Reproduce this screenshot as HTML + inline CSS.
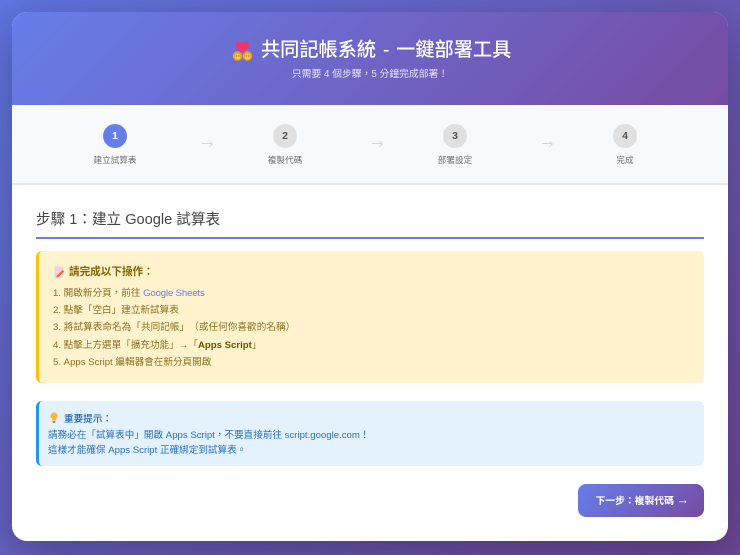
<!DOCTYPE html>
<html lang="zh-Hant">
<head>
<meta charset="utf-8">
<title>共同記帳系統</title>
<style>
*{box-sizing:border-box;margin:0;padding:0}
html,body{width:740px;height:555px;overflow:hidden}
body{position:relative;background:linear-gradient(135deg,#5f76e2 0%,#6f4698 100%);font-family:"Liberation Sans","Noto Sans CJK TC",sans-serif;color:#333;text-spacing-trim:space-all;font-kerning:none}
.shadow{position:absolute;left:12px;top:12px;width:716px;height:529px;border-radius:15px;box-shadow:0 12px 45px rgba(0,0,0,.3)}
.card{position:absolute;left:12px;top:12px;width:716px;height:529px;background:#fff;border-radius:15px;overflow:hidden;filter:blur(.3px)}
.abs{position:absolute;white-space:nowrap}
.head{position:absolute;left:0;top:0;width:716px;height:93px;background:linear-gradient(135deg,#667eea 0%,#764ba2 100%)}
.steps{position:absolute;left:0;top:93px;width:716px;height:80px;background:#f8f9fa;border-bottom:2px solid #e4e6e9}
.c{position:absolute;top:19px;width:24px;height:24px;border-radius:50%;background:#e0e0e0;color:#555;font-size:10.5px;font-weight:bold;line-height:24px;text-align:center}
.c.on{background:#667eea;color:#fff}
.sl{position:absolute;top:48px;width:120px;text-align:center;font-size:8.6px;line-height:14px;color:#707070}
.ar{position:absolute;top:38px;width:10px;height:1px;background:#d6d6d6}
.ar:after{content:"";position:absolute;right:0;top:-1px;width:3px;height:3px;border-top:1px solid #d6d6d6;border-right:1px solid #d6d6d6;transform:rotate(45deg)}
.yb{position:absolute;left:24px;top:239px;width:668px;height:132px;background:#fff3cd;border-left:3px solid #ffc107;border-radius:6px}
.li{position:absolute;left:41px;font-size:9.6px;line-height:17px;color:#8d7122;white-space:nowrap}
.bb{position:absolute;left:24px;top:389px;width:668px;height:65px;background:#e3f2fd;border-left:3px solid #2196f3;border-radius:6px}
.bl{position:absolute;left:36px;font-size:9.6px;line-height:15px;color:#2a70bd;white-space:nowrap}
.btn{position:absolute;left:566px;top:472px;width:126px;height:33px;border-radius:8px;background:linear-gradient(135deg,#667eea 0%,#764ba2 100%);color:#fff;font-size:9.8px;font-weight:bold;line-height:33px;white-space:nowrap;padding-left:17.5px}
</style>
</head>
<body>
<div class="shadow"></div>
<div class="card">
  <div class="head"></div>
  <svg class="abs" style="left:220px;top:29px" width="21" height="21" viewBox="0 0 21 21">
    <path d="M10.500 11.500C6 8.500 3.800 6.500 3.800 4 3.800 2 5.300 .8 6.900 .8 8.400 .8 9.800 1.700 10.500 3 11.200 1.700 12.600 .8 14.100 .8 15.700 .8 17.200 2 17.200 4 17.200 6.500 15 8.500 10.500 11.500Z" fill="#f5316f"/>
    <circle cx="5.500" cy="15" r="4.800" fill="#ef9f26"/>
    <circle cx="15.500" cy="15" r="4.800" fill="#ef9f26"/>
    <circle cx="5.500" cy="15.500" r="3" fill="#f9c93f"/>
    <circle cx="15.500" cy="15.500" r="3" fill="#f9c93f"/>
    <path d="M3.700 15h1M6.300 15h1M13.700 15h1M16.300 15h1" stroke="#7a4a10" stroke-width=".9"/>
  </svg>
  <div class="abs" style="left:249px;top:24px;font-size:19.2px;line-height:30px;font-weight:500;color:#fff;word-spacing:1.5px">共同記帳系統 - 一鍵部署工具</div>
  <div class="abs" style="left:0;top:55px;width:716px;text-align:center;font-size:9.8px;line-height:16px;color:#fff;opacity:.82">只需要 4 個步驟，5 分鐘完成部署！</div>

  <div class="steps">
    <div class="c on" style="left:91px">1</div>
    <div class="sl" style="left:43px">建立試算表</div>
    <div class="ar" style="left:190px"></div>
    <div class="c" style="left:261px">2</div>
    <div class="sl" style="left:213px">複製代碼</div>
    <div class="ar" style="left:360px"></div>
    <div class="c" style="left:431px">3</div>
    <div class="sl" style="left:383px">部署設定</div>
    <div class="ar" style="left:530px"></div>
    <div class="c" style="left:601px">4</div>
    <div class="sl" style="left:553px">完成</div>
  </div>

  <div class="abs" style="left:24px;top:197px;font-size:14.6px;line-height:22px;color:#444">步驟 1：建立 Google 試算表</div>
  <div class="abs" style="left:24px;top:225px;width:668px;height:2px;background:#667eea"></div>

  <div class="yb"></div>
  <svg class="abs" style="left:42px;top:254px" width="11" height="12" viewBox="0 0 11 12">
    <path d="M.5.500h7.500l1 1V11.500H.5z" fill="#e6d6e6"/>
    <path d="M2 10.500l6.500-6.500 1.800 1.500-6.300 6z" fill="#ec6a3c"/>
  </svg>
  <div class="abs" style="left:57px;top:252px;font-size:10.6px;line-height:16px;font-weight:bold;color:#856404">請完成以下操作：</div>
  <div class="li" style="top:273px">1. 開啟新分頁，前往 <span style="color:#667eea;letter-spacing:-.15px">Google Sheets</span></div>
  <div class="li" style="top:290px">2. 點擊「空白」建立新試算表</div>
  <div class="li" style="top:307px;letter-spacing:.05px">3. 將試算表命名為「共同記帳」（或任何你喜歡的名稱）</div>
  <div class="li" style="top:325px">4. 點擊上方選單「擴充功能」→「<b style="color:#6f5303">Apps Script</b>」</div>
  <div class="li" style="top:342px">5. Apps Script 編輯器會在新分頁開啟</div>

  <div class="bb"></div>
  <svg class="abs" style="left:38px;top:400px" width="8" height="12" viewBox="0 0 8 12">
    <path d="M4 .5A3.500 3.500 0 0 0 2 6.900V8.500h4V6.900A3.500 3.500 0 0 0 4 .5Z" fill="#fdb92b"/>
    <rect x="2.700" y="9" width="2.600" height="2" fill="#a08a5c"/>
  </svg>
  <div class="bl" style="left:52px;top:400px;font-weight:500;color:#1f62ad">重要提示：</div>
  <div class="bl" style="top:416px">請務必在「試算表中」開啟 Apps Script，不要直接前往 script.google.com！</div>
  <div class="bl" style="top:431px">這樣才能確保 Apps Script 正確綁定到試算表。</div>

  <div class="btn">下一步：複製代碼 <span style="font-size:12.500px;font-weight:normal">→</span></div>
</div>
</body>
</html>
